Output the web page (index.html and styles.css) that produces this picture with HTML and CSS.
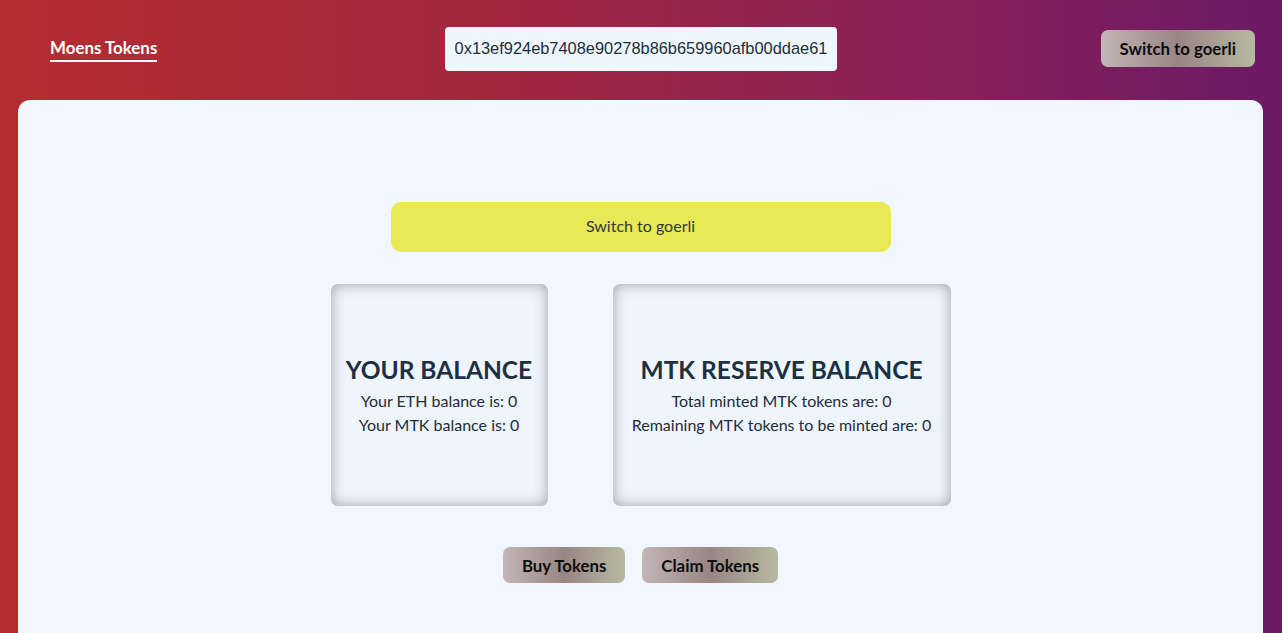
FILE: index.html
```html
<!DOCTYPE html>
<html lang="en">
<head>
<meta charset="utf-8">
<title>Moens Tokens</title>
<link rel="stylesheet" href="styles.css">
</head>
<body>
<div class="app">
  <header class="topbar">
    <div class="topbar-left">
      <a class="brand" href="#">Moens Tokens</a>
    </div>
    <div class="address">0x13ef924eb7408e90278b86b659960afb00ddae61</div>
    <div class="topbar-right">
      <button class="btn-grad">Switch to goerli</button>
    </div>
  </header>
  <main class="panel">
    <button class="btn-switch">Switch to goerli</button>
    <div class="cards">
      <section class="card card-small">
        <h2 class="card-title">YOUR BALANCE</h2>
        <p class="card-line">Your ETH balance is: 0</p>
        <p class="card-line">Your MTK balance is: 0</p>
      </section>
      <section class="card card-wide">
        <h2 class="card-title">MTK RESERVE BALANCE</h2>
        <p class="card-line">Total minted MTK tokens are: 0</p>
        <p class="card-line">Remaining MTK tokens to be minted are: 0</p>
      </section>
    </div>
    <div class="actions">
      <button class="btn-grad btn-action">Buy Tokens</button>
      <button class="btn-grad btn-action">Claim Tokens</button>
    </div>
  </main>
</div>
</body>
</html>
```
FILE: styles.css
```css
* { box-sizing: border-box; }
html, body {
  margin: 0;
  height: 100%;
  overflow: hidden;
}
body {
  font-family: "Lato", "Liberation Sans", sans-serif;
  font-size: 16px;
  color: #1e2d3b;
  background: linear-gradient(90deg, #b42e30 0%, #a1263f 40%, #86205a 75%, #6c1966 100%);
}
.app {
  min-height: 100%;
  display: flex;
  flex-direction: column;
}
.topbar {
  height: 100px;
  display: grid;
  grid-template-columns: 1fr auto 1fr;
  align-items: center;
  padding: 0 27px 3px 27px;
}
.topbar-left {
  display: flex;
  justify-content: flex-start;
  padding-left: 23px;
}
.brand {
  color: #ffffff;
  font-weight: 700;
  font-size: 16.9px;
  text-decoration: none;
  padding-bottom: 2px;
  border-bottom: 2px solid #ffffff;
  margin-top: 1px;
}
.address {
  background: #eff7fe;
  border-radius: 4px;
  height: 44px;
  padding: 0 10px;
  display: flex;
  align-items: center;
  font-family: "Liberation Sans", sans-serif;
  font-size: 16.4px;
  color: #1e2d3b;
}
.topbar-right {
  display: flex;
  justify-content: flex-end;
}
.btn-grad {
  font-family: inherit;
  font-weight: 700;
  font-size: 16.8px;
  color: #0d0d0d;
  border: none;
  border-radius: 7px;
  background: linear-gradient(90deg, #c3b6b6 0%, #998584 50%, #b7b9a1 100%);
  height: 37px;
  padding: 0 19px;
  cursor: pointer;
}
.panel {
  flex: 1;
  margin: 0 19px 0 18px;
  background: #f0f7fe;
  border-radius: 12px 12px 0 0;
  display: flex;
  flex-direction: column;
  align-items: center;
  padding-top: 102px;
}
.btn-switch {
  width: 500px;
  height: 50px;
  background: #e9e857;
  border: none;
  border-radius: 10px;
  font-family: inherit;
  font-size: 16px;
  color: #2e3a40;
  padding: 0 0 3px;
  cursor: pointer;
}
.cards {
  display: flex;
  gap: 65px;
  margin-top: 32px;
}
.card {
  height: 222px;
  border-radius: 7px;
  background: #eef5fc;
  box-shadow: inset 0 0 14px rgba(60, 60, 70, 0.45);
  display: flex;
  flex-direction: column;
  align-items: center;
  justify-content: center;
  padding: 2px 10px 0;
  text-align: center;
}
.card-small { width: 217px; }
.card-wide { width: 338px; }
.card-title {
  margin: 0 0 4px;
  font-size: 24.5px;
  line-height: 30px;
  font-weight: 700;
  color: #1c3042;
  white-space: nowrap;
}
.card-line {
  margin: 0;
  line-height: 24px;
  color: #1e2d3b;
  white-space: nowrap;
}
.actions {
  display: flex;
  gap: 17px;
  margin-top: 41px;
}
.btn-action {
  height: 36px;
  padding: 0 19px;
}
```
